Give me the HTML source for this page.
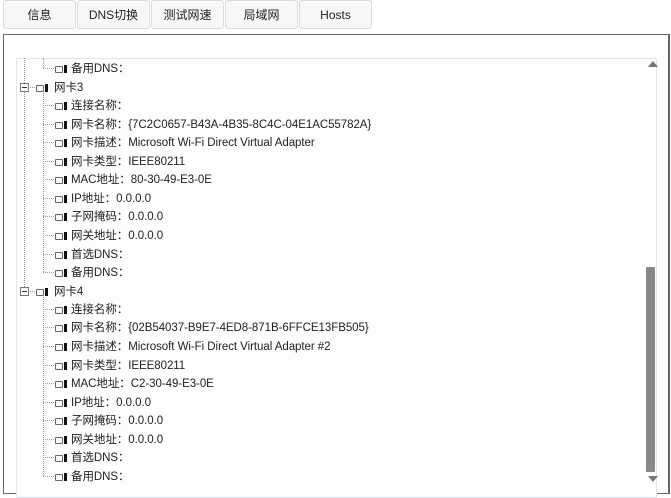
<!DOCTYPE html>
<html><head><meta charset="utf-8"><style>
body{margin:0;width:671px;height:487px;overflow:hidden;background:#fff;font-family:"Liberation Sans","Noto Sans CJK SC",sans-serif;position:relative}
.btn{position:absolute;top:0;height:29px;border:1px solid #dcdcdc;border-radius:3px;background:#f7f7f7;font-size:12px;color:#222;text-align:center;line-height:29px;box-sizing:border-box}
.outer{position:absolute;left:3px;top:34px;width:667px;height:460px;border:1px solid #666;border-right:2px solid #666;box-sizing:border-box}
.inner{position:absolute;left:16px;top:58px;width:641px;height:440px;border:1px solid #e0e6ee;box-sizing:border-box;background:#fdfdfd}
.row{position:absolute;font-size:11.5px;color:#222;line-height:16px;white-space:nowrap;margin-top:1px;letter-spacing:-0.05px}
.ic{position:absolute;width:13px;height:9px}
.ic:before{content:"";position:absolute;left:0;top:2px;width:6px;height:5px;border:1px solid #666;border-radius:1px}
.ic:after{content:"";position:absolute;left:9px;top:1px;width:3px;height:8px;background:#111}
.vl{position:absolute;border-left:1px dotted #999;width:0}
.hl{position:absolute;border-top:1px dotted #999;height:0}
.exp{position:absolute;width:7px;height:7px;border:1px solid #777;background:#fff}
.exp:after{content:"";position:absolute;left:1px;top:3px;width:5px;height:1px;background:#333}
.thumb{position:absolute;left:646px;top:267px;width:9px;height:205px;background:#888;border-radius:1px}
</style></head><body>
<div class="btn" style="left:3px;width:73px">信息</div>
<div class="btn" style="left:77px;width:73px">DNS切换</div>
<div class="btn" style="left:151px;width:73px">测试网速</div>
<div class="btn" style="left:225px;width:73px">局域网</div>
<div class="btn" style="left:299px;width:73px">Hosts</div>
<div class="outer"></div>
<div class="inner"></div>
<div style="position:absolute;left:648px;top:61px;width:0;height:0;border-left:5px solid transparent;border-right:5px solid transparent;border-bottom:6px solid #777"></div>
<div class="thumb"></div>
<div style="position:absolute;left:648px;top:476px;width:0;height:0;border-left:5px solid transparent;border-right:5px solid transparent;border-top:6px solid #777"></div>

<div class="vl" style="left:24px;top:58px;height:233px"></div>
<div class="vl" style="left:43px;top:58px;height:10px"></div>
<div class="hl" style="left:43px;top:68px;width:11px"></div><div class="ic" style="left:55px;top:64px"></div><div class="row" style="left:71px;top:60px">备用DNS：</div>

<div class="hl" style="left:28px;top:87px;width:7px"></div><div class="exp" style="left:20px;top:83px"></div><div class="ic" style="left:36px;top:83px"></div><div class="row" style="left:54px;top:79px">网卡3</div>
<div class="vl" style="left:43px;top:93px;height:179px"></div>
<div class="hl" style="left:43px;top:105px;width:11px"></div><div class="ic" style="left:55px;top:101px"></div><div class="row" style="left:71px;top:97px">连接名称：</div>
<div class="hl" style="left:43px;top:124px;width:11px"></div><div class="ic" style="left:55px;top:120px"></div><div class="row" style="left:71px;top:116px">网卡名称：{7C2C0657-B43A-4B35-8C4C-04E1AC55782A}</div>
<div class="hl" style="left:43px;top:142px;width:11px"></div><div class="ic" style="left:55px;top:138px"></div><div class="row" style="left:71px;top:134px">网卡描述：Microsoft Wi-Fi Direct Virtual Adapter</div>
<div class="hl" style="left:43px;top:161px;width:11px"></div><div class="ic" style="left:55px;top:157px"></div><div class="row" style="left:71px;top:153px">网卡类型：IEEE80211</div>
<div class="hl" style="left:43px;top:179px;width:11px"></div><div class="ic" style="left:55px;top:175px"></div><div class="row" style="left:71px;top:171px">MAC地址：80-30-49-E3-0E</div>
<div class="hl" style="left:43px;top:198px;width:11px"></div><div class="ic" style="left:55px;top:194px"></div><div class="row" style="left:71px;top:190px">IP地址：0.0.0.0</div>
<div class="hl" style="left:43px;top:216px;width:11px"></div><div class="ic" style="left:55px;top:212px"></div><div class="row" style="left:71px;top:208px">子网掩码：0.0.0.0</div>
<div class="hl" style="left:43px;top:235px;width:11px"></div><div class="ic" style="left:55px;top:231px"></div><div class="row" style="left:71px;top:227px">网关地址：0.0.0.0</div>
<div class="hl" style="left:43px;top:254px;width:11px"></div><div class="ic" style="left:55px;top:250px"></div><div class="row" style="left:71px;top:246px">首选DNS：</div>
<div class="hl" style="left:43px;top:272px;width:11px"></div><div class="ic" style="left:55px;top:268px"></div><div class="row" style="left:71px;top:264px">备用DNS：</div>

<div class="hl" style="left:28px;top:291px;width:7px"></div><div class="exp" style="left:20px;top:287px"></div><div class="ic" style="left:36px;top:287px"></div><div class="row" style="left:54px;top:283px">网卡4</div>
<div class="vl" style="left:43px;top:297px;height:179px"></div>
<div class="hl" style="left:43px;top:309px;width:11px"></div><div class="ic" style="left:55px;top:305px"></div><div class="row" style="left:71px;top:301px">连接名称：</div>
<div class="hl" style="left:43px;top:327px;width:11px"></div><div class="ic" style="left:55px;top:323px"></div><div class="row" style="left:71px;top:319px">网卡名称：{02B54037-B9E7-4ED8-871B-6FFCE13FB505}</div>
<div class="hl" style="left:43px;top:346px;width:11px"></div><div class="ic" style="left:55px;top:342px"></div><div class="row" style="left:71px;top:338px">网卡描述：Microsoft Wi-Fi Direct Virtual Adapter #2</div>
<div class="hl" style="left:43px;top:365px;width:11px"></div><div class="ic" style="left:55px;top:361px"></div><div class="row" style="left:71px;top:357px">网卡类型：IEEE80211</div>
<div class="hl" style="left:43px;top:383px;width:11px"></div><div class="ic" style="left:55px;top:379px"></div><div class="row" style="left:71px;top:375px">MAC地址：C2-30-49-E3-0E</div>
<div class="hl" style="left:43px;top:402px;width:11px"></div><div class="ic" style="left:55px;top:398px"></div><div class="row" style="left:71px;top:394px">IP地址：0.0.0.0</div>
<div class="hl" style="left:43px;top:420px;width:11px"></div><div class="ic" style="left:55px;top:416px"></div><div class="row" style="left:71px;top:412px">子网掩码：0.0.0.0</div>
<div class="hl" style="left:43px;top:439px;width:11px"></div><div class="ic" style="left:55px;top:435px"></div><div class="row" style="left:71px;top:431px">网关地址：0.0.0.0</div>
<div class="hl" style="left:43px;top:457px;width:11px"></div><div class="ic" style="left:55px;top:453px"></div><div class="row" style="left:71px;top:449px">首选DNS：</div>
<div class="hl" style="left:43px;top:476px;width:11px"></div><div class="ic" style="left:55px;top:472px"></div><div class="row" style="left:71px;top:468px">备用DNS：</div>
</body></html>
